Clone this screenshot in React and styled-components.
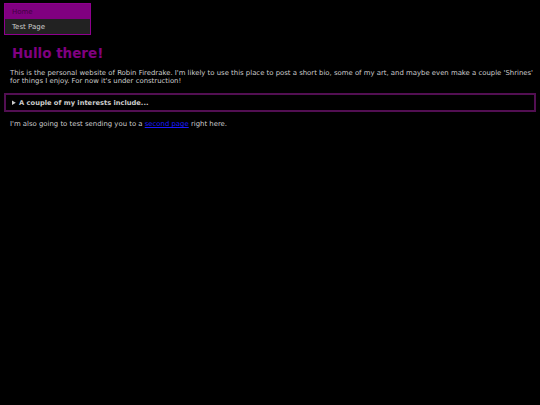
import React from 'react';
import styled, { createGlobalStyle } from 'styled-components';

const GlobalStyle = createGlobalStyle`
   html, body {
      margin: 0;
      padding: 0;
      background: #000;
   }
   body {
      font-family: "DejaVu Sans", Verdana, sans-serif;
      font-size: 6.9px;
      color: #ccc;
   }
`;

const Page = styled.div`
   display: flex;
   flex-direction: column;
   padding: 3px 4px;
`;

const Nav = styled.nav`
   display: flex;
   flex-direction: column;
   width: 85px;
   border: 1px solid #8e008e;
`;

const NavItem = styled.a`
   display: flex;
   align-items: center;
   padding: 1px 7px 0 7px;
   height: 15px;
   box-sizing: border-box;
   font-size: 7px;
   text-decoration: none;
   color: ${props => props.active ? '#420042' : '#cccccc'};
   background: ${props => props.active ? '#800080' : '#222222'};
`;

const Heading = styled.h1`
   margin: 10px 0 0 8px;
   font-size: 13.5px;
   line-height: 16px;
   font-weight: bold;
   color: #800080;
`;

const Text = styled.p`
   margin: ${props => props.top || '8px'} 0 0 6px;
   line-height: 8px;
   color: #cccccc;
`;

const Details = styled.details`
   margin-top: 8px;
   border: 2px solid #520f52;
   padding: 4px 6px;
   height: 19px;
   box-sizing: border-box;
`;

const Summary = styled.summary`
   font-size: 6.7px;
   font-weight: bold;
   cursor: pointer;
   color: #cccccc;
   line-height: 8px;
`;

const Link = styled.a`
   color: #1a1aff;
`;

export default function App() {
   return (
      <Page>
         <GlobalStyle/>
         <Nav>
            <NavItem href="#" active>Home</NavItem>
            <NavItem href="#">Test Page</NavItem>
         </Nav>
         <Heading>Hullo there!</Heading>
         <Text>
            This is the personal website of Robin Firedrake. I'm likely to use this place to post a short bio, some of my art, and maybe even make a couple 'Shrines' for things I enjoy. For now it's under construction!
         </Text>
         <Details>
            <Summary>A couple of my interests include...</Summary>
         </Details>
         <Text top="8px">
            I'm also going to test sending you to a <Link href="#">second page</Link> right here.
         </Text>
      </Page>
   );
}
